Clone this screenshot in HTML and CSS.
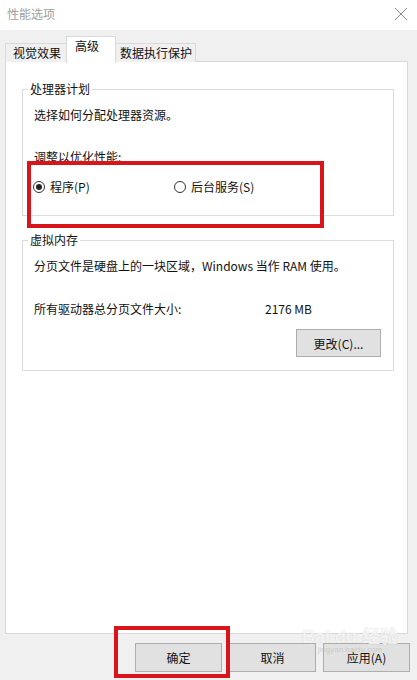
FILE: index.html
```html
<!DOCTYPE html>
<html>
<head>
    <meta charset="utf-8">
    <title>性能选项</title>
    <link rel="stylesheet" href="styles.css">
</head>
<body>

    <div class="window">
        <div class="titlebar">
            <span class="title">性能选项</span>
            <svg class="close" width="14" height="14" viewBox="0 0 14 14">
                <path d="M1 1 L13 13 M13 1 L1 13" stroke="#8a8a8a" stroke-width="1" fill="none"/>
            </svg>
        </div>

        <div class="tabs">
            <div class="tab tab-visual">视觉效果</div>
            <div class="tab tab-advanced active">高级</div>
            <div class="tab tab-dep">数据执行保护</div>
        </div>

        <div class="panel">
            <fieldset class="group group-cpu">
                <legend>处理器计划</legend>
                <div class="desc">选择如何分配处理器资源。</div>
                <div class="subtitle">调整以优化性能:</div>
                <div class="radios">
                    <label class="radio-item first">
                        <span class="radio checked"></span>程序(P)
                    </label>
                    <label class="radio-item">
                        <span class="radio"></span>后台服务(S)
                    </label>
                </div>
            </fieldset>

            <fieldset class="group group-mem">
                <legend>虚拟内存</legend>
                <div class="desc">分页文件是硬盘上的一块区域，Windows 当作 RAM 使用。</div>
                <div class="size-row">
                    <span class="size-label">所有驱动器总分页文件大小:</span>
                    <span class="size-value">2176 MB</span>
                </div>
                <div class="change-row">
                    <button class="btn">更改(C)...</button>
                </div>
            </fieldset>
        </div>

        <div class="footer">
            <button class="btn btn-footer">确定</button>
            <button class="btn btn-footer">取消</button>
            <button class="btn btn-footer">应用(A)</button>
        </div>

        <!-- 标注框 -->
        <div class="mark mark-radios"></div>
        <div class="mark mark-ok"></div>

        <div class="watermark">
            <span class="wm-big">Bai du 经验</span>
            <span class="wm-small">jingyan.baidu.com</span>
        </div>
    </div>

</body>
</html>
```

FILE: styles.css
```css
html, body {
    margin: 0;
    padding: 0;
}
body {
    width: 417px;
    height: 680px;
    background-color: #f0f0f0;
    font-family: "Noto Sans CJK SC", "Noto Sans", sans-serif;
    font-size: 12px;
    color: #111;
    overflow: hidden;
}
.window {
    position: relative;
    width: 417px;
    height: 680px;
}
.titlebar {
    height: 30px;
    background-color: #fff;
    display: flex;
    align-items: center;
    justify-content: space-between;
    padding: 0 9px 0 7px;
    box-sizing: border-box;
}
.title {
    color: #a0a0a0;
    font-size: 12px;
    line-height: 16px;
    margin-top: -2px;
}
.close {
    display: block;
    margin-top: -2px;
}
.tabs {
    display: flex;
    align-items: flex-end;
    height: 26px;
    margin-top: 6px;
    padding-left: 5px;
}
.tab {
    box-sizing: border-box;
    height: 19px;
    line-height: 17px;
    border: 1px solid #d9d9d9;
    border-bottom: none;
    background-color: #f0f0f0;
    white-space: nowrap;
}
.tab-visual {
    width: 61px;
    padding-left: 7px;
    border-right: none;
}
.tab-advanced {
    width: 50px;
    padding-left: 8px;
}
.tab-dep {
    width: 80px;
    padding-left: 4px;
    border-left: none;
}
.tab.active {
    position: relative;
    z-index: 1;
    height: 27px;
    margin-bottom: -1px;
    line-height: 18px;
    background-color: #fff;
    border-left: 1px solid #d9d9d9;
}
.panel {
    box-sizing: border-box;
    width: 403px;
    height: 573px;
    margin-left: 5px;
    margin-top: -1px;
    border: 1px solid #d9d9d9;
    background-color: #fff;
    padding: 19px 13px 0 16px;
}
.group {
    margin: 0;
    border: 1px solid #dcdcdc;
    padding: 0 12px 0 11px;
}
.group legend {
    padding: 0 2px;
    margin-left: -6px;
    line-height: 16px;
}
.group-cpu {
    height: 135px;
    box-sizing: border-box;
}
.group-mem {
    margin-top: 16px;
    height: 139px;
    box-sizing: border-box;
}
.desc, .subtitle, .size-row, .radios {
    line-height: 16px;
    white-space: nowrap;
}
.desc {
    margin-top: 10px;
}
.subtitle {
    margin-top: 26px;
}
.radios {
    display: flex;
    margin-top: 14px;
}
.radio-item {
    display: flex;
    align-items: center;
}
.radio-item.first {
    width: 141px;
    margin-left: -1px;
}
.radio {
    box-sizing: border-box;
    width: 12px;
    height: 12px;
    border: 1px solid #333;
    border-radius: 50%;
    margin-right: 5px;
    display: flex;
    align-items: center;
    justify-content: center;
}
.radio.checked::after {
    content: "";
    width: 6px;
    height: 6px;
    border-radius: 50%;
    background-color: #222;
}
.size-row {
    display: flex;
    margin-top: 27px;
}
.size-label {
    width: 231px;
}
.change-row {
    display: flex;
    justify-content: flex-end;
    margin-top: 12px;
}
.btn {
    box-sizing: border-box;
    font-family: "Noto Sans CJK SC", "Noto Sans", sans-serif;
    font-size: 12px;
    color: #111;
    background-color: #e1e1e1;
    border: 1px solid #adadad;
    width: 85px;
    height: 28px;
    padding: 0;
}
.footer {
    display: flex;
    justify-content: flex-end;
    gap: 7px;
    padding: 9px 7px 0 0;
}
.btn-footer {
    width: 87px;
    height: 29px;
}
.mark {
    position: absolute;
    border: 4px solid #d8151b;
    box-sizing: border-box;
}
.mark-radios {
    left: 27px;
    top: 161px;
    width: 297px;
    height: 67px;
}
.mark-ok {
    left: 114px;
    top: 626px;
    width: 116px;
    height: 52px;
}
.watermark {
    position: absolute;
    left: 302px;
    top: 628px;
    display: flex;
    flex-direction: column;
    align-items: center;
    pointer-events: none;
}
.wm-big {
    font-family: "Liberation Sans", "Noto Sans CJK SC", sans-serif;
    font-size: 18px;
    font-weight: bold;
    color: rgba(255, 255, 255, 0.8);
    text-shadow: 0 0 1px rgba(120, 120, 120, 0.35);
    line-height: 18px;
}
.wm-small {
    font-family: "Liberation Sans", sans-serif;
    font-size: 8px;
    color: rgba(190, 190, 190, 0.7);
    line-height: 8px;
}
```
